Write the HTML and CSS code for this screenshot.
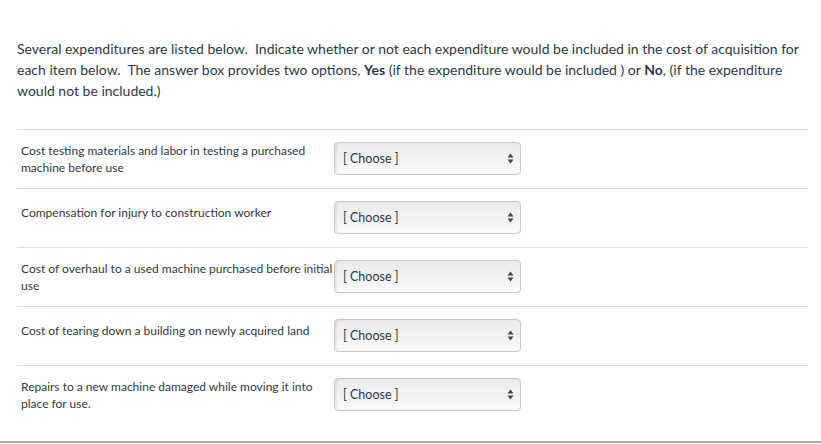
FILE: index.html
```html
<!DOCTYPE html>
<html>
<head>
<meta charset="utf-8">
<link rel="stylesheet" href="styles.css">
</head>
<body>
<div class="question">
  <p class="intro">Several expenditures are listed below.&nbsp; Indicate whether or not each expenditure would be included in the cost of acquisition for each item below.&nbsp; The answer box provides two options, <strong>Yes</strong> (if the expenditure would be included ) or <strong>No</strong>, (if the expenditure would not be included.)</p>
  <div class="answers">
    <div class="row">
      <div class="label">Cost testing materials and labor in testing a purchased machine before use</div>
      <div class="select-wrap"><select class="select"><option>[ Choose ]</option></select><svg class="arrows" width="7" height="11" viewBox="0 0 7 11"><path d="M3.5 0.5 L6.5 4.5 H0.5 Z M3.5 10.5 L6.5 6.5 H0.5 Z" fill="#3b4852"/></svg></div>
    </div>
    <div class="row">
      <div class="label single">Compensation for injury to construction worker</div>
      <div class="select-wrap"><select class="select"><option>[ Choose ]</option></select><svg class="arrows" width="7" height="11" viewBox="0 0 7 11"><path d="M3.5 0.5 L6.5 4.5 H0.5 Z M3.5 10.5 L6.5 6.5 H0.5 Z" fill="#3b4852"/></svg></div>
    </div>
    <div class="row">
      <div class="label">Cost of overhaul to a used machine purchased before initial use</div>
      <div class="select-wrap"><select class="select"><option>[ Choose ]</option></select><svg class="arrows" width="7" height="11" viewBox="0 0 7 11"><path d="M3.5 0.5 L6.5 4.5 H0.5 Z M3.5 10.5 L6.5 6.5 H0.5 Z" fill="#3b4852"/></svg></div>
    </div>
    <div class="row">
      <div class="label single">Cost of tearing down a building on newly acquired land</div>
      <div class="select-wrap"><select class="select"><option>[ Choose ]</option></select><svg class="arrows" width="7" height="11" viewBox="0 0 7 11"><path d="M3.5 0.5 L6.5 4.5 H0.5 Z M3.5 10.5 L6.5 6.5 H0.5 Z" fill="#3b4852"/></svg></div>
    </div>
    <div class="row">
      <div class="label">Repairs to a new machine damaged while moving it into place for use.</div>
      <div class="select-wrap"><select class="select"><option>[ Choose ]</option></select><svg class="arrows" width="7" height="11" viewBox="0 0 7 11"><path d="M3.5 0.5 L6.5 4.5 H0.5 Z M3.5 10.5 L6.5 6.5 H0.5 Z" fill="#3b4852"/></svg></div>
    </div>
  </div>
</div>
<div class="footer"></div>
</body>
</html>
```
FILE: styles.css
```css
html, body {
  margin: 0;
  padding: 0;
  background: #fff;
}
body {
  font-family: Lato, "Open Sans", "Liberation Sans", sans-serif;
  color: #2d3b45;
  width: 821px;
  height: 444px;
  overflow: hidden;
}
.question {
  padding: 38px 13px 0 17px;
  height: 441px;
  box-sizing: border-box;
}
.intro {
  margin: 0;
  font-size: 14px;
  line-height: 21px;
}
.intro strong {
  font-weight: 700;
}
.answers {
  margin-top: 28px;
}
.row {
  display: flex;
  align-items: flex-start;
  height: 58px;
  border-top: 1px solid #dcdcdc;
}
.label {
  flex: 0 0 318px;
  box-sizing: border-box;
  padding: 12px 0 0 4px;
  font-size: 12px;
  line-height: 17px;
}
.label.single {
  padding-top: 15px;
}
.select-wrap {
  position: relative;
  flex: 0 0 187px;
  margin: 12px 0 0 -1px;
  height: 33px;
}
.select {
  -webkit-appearance: none;
  appearance: none;
  display: block;
  width: 187px;
  height: 33px;
  box-sizing: border-box;
  margin: 0;
  padding: 0 0 0 8px;
  border: 1px solid #c9c9c9;
  border-radius: 4px;
  background: linear-gradient(to bottom, #ebebeb 0%, #f3f3f3 55%, #fbfbfb 100%);
  box-shadow: inset 2px 0 2px rgba(0,0,0,0.06);
  font-family: Lato, "Open Sans", "Liberation Sans", sans-serif;
  font-size: 12.5px;
  color: #2d3b45;
  outline: none;
}
.arrows {
  position: absolute;
  right: 7px;
  top: 11px;
}
.footer {
  height: 1px;
  border-top: 2px solid #a8a8a8;
}
```
